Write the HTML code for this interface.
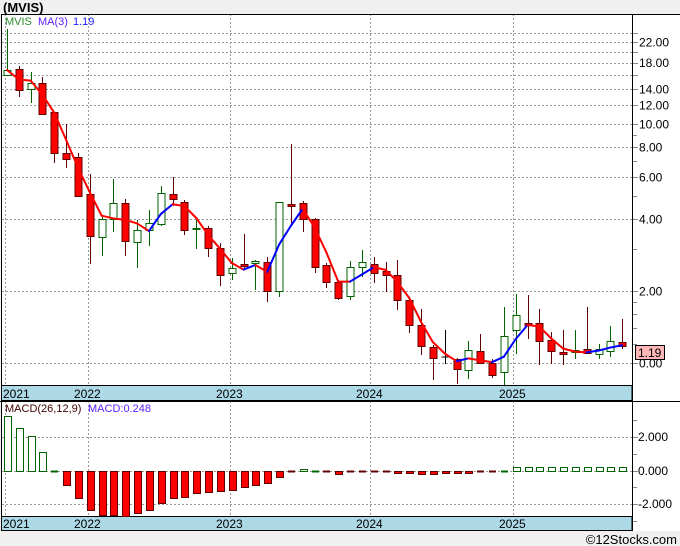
<!DOCTYPE html>
<html><head><meta charset="utf-8"><style>
html,body{margin:0;padding:0;background:#f0f0f0;width:680px;height:546px;overflow:hidden}
svg{display:block}
text{font-family:"Liberation Sans","DejaVu Sans",sans-serif}
</style></head><body>
<svg id="s" width="680" height="546" xmlns="http://www.w3.org/2000/svg">
<rect x="0" y="0" width="680" height="546" fill="#f0f0f0"/>
<text x="3" y="12" font-size="13" font-weight="bold" fill="#000">(MVIS)</text>
<rect x="1" y="14" width="679" height="517" fill="#fff"/>
<g id="g"></g>
</svg>
<script>
var g=document.getElementById('g'),h='';
function L(x1,y1,x2,y2,c,w,d){h+='<line x1="'+x1+'" y1="'+y1+'" x2="'+x2+'" y2="'+y2+'" stroke="'+c+'" stroke-width="'+(w||1)+'"'+(d?' stroke-dasharray="'+d+'"':'')+'/>';}
function R(x,y,w,hh,f,s){h+='<rect x="'+x+'" y="'+y+'" width="'+w+'" height="'+hh+'" fill="'+f+'" stroke="'+s+'" stroke-width="1"/>';}
function T(x,y,t,c,sz,a){h+='<text x="'+x+'" y="'+y+'" font-size="'+(sz||12)+'" fill="'+c+'"'+(a?' text-anchor="'+a+'"':'')+'>'+t+'</text>';}
function Y(p){return 363-239.2*Math.log10(p);}
[24,22,20,18,16,14,12,10,8,6,4,2,1].forEach(function(p){var y=Math.round(Y(p))+.5;L(2,y,632,y,'#999',1,'2,2');L(632,y,638,y,'#888');});
[9,7,5,3,1.8,1.6,1.4,1.2].forEach(function(p){var y=Math.round(Y(p))+.5;L(632,y,637,y,'#888');});
var yrs=[[88.5,'2022',74],[230.5,'2023',216],[370.5,'2024',356],[513.5,'2025',499]];
yrs.forEach(function(v){L(v[0],14,v[0],385,'#999',1,'2,2');L(v[0],401,v[0],516,'#999',1,'2,2');});
L(5.5,14,5.5,385,'#999',1,'2,2');L(5.5,401,5.5,516,'#999',1,'2,2');
[[22,'22.00'],[18,'18.00'],[14,'14.00'],[12,'12.00'],[10,'10.00'],[8,'8.00'],[6,'6.00'],[4,'4.00'],[2,'2.00'],[1,'0.00']].forEach(function(v){T(639,Y(v[0])+4.5,v[1],'#000',12);});
var C=[
['g',75,70,29,75],['r',69,90,66,97],['g',89,83,72,103],['r',83,114,77,115],['r',112,153,112,163],['r',153,159,124,168],['r',157,196,153,196],['r',194,236,174,264],['g',237,219,217,256],['g',219,203,179,232],
['r',203,241,199,256],['g',242,230,220,268],['g',230,223,210,246],['g',224,193,186,226],['r',194,199,177,206],['r',202,230,200,235],['g',229,228,220,249],['r',228,248,226,257],['r',248,275,243,286],['g',273,268,258,280],
['r',264,266,234,270],['g',263,261,260,290],['r',262,291,257,302],['g',291,202,202,297],['r',204,206,144,224],['r',203,219,201,232],['r',219,267,218,273],['r',265,282,263,288],['r',282,298,280,300],['g',296,267,261,300],
['g',267,262,250,277],['r',264,273,257,283],['r',271,275,262,292],['r',275,300,260,310],['r',300,325,298,333],['r',325,346,309,355],['r',347,358,345,380],['k',357,357,330,364],['r',359,369,358,384],['g',370,350,341,379],
['r',351,363,334,364],['r',363,375,359,378],['g',372,336,307,387],['g',330,315,294,354],['r',323,325,295,339],['r',323,341,309,365],['r',340,351,332,364],['r',352,354,330,365],['g',352,350,330,359],['r',349,353,307,354],
['g',354,349,344,359],['g',351,341,326,357],['r',342,346,319,349]];
function X(i){return 7+i*11.83;}
var closes=[];
C.forEach(function(c,i){var x=Math.round(X(i))+.5,t=Math.min(c[1],c[2]),b=Math.max(c[1],c[2]);
 var wc=c[0]=='r'?'#600000':(c[0]=='g'?'#006400':'#000');
 L(x,c[3],x,t,wc);L(x,b,x,c[4],wc);
 var bh=Math.max(b-t,1);
 if(c[0]=='r')R(x-3.5,t+.5,7,bh,'#ff0000','#600000');
 else if(c[0]=='g')R(x-3.5,t+.5,7,bh,'#fff','#006400');
 else L(x-4,t,x+4,t,'#000');
 closes.push(Math.pow(10,(363-c[2])/239.2));});
var ma=[];for(var i=2;i<closes.length;i++){ma.push([X(i),Y((closes[i]+closes[i-1]+closes[i-2])/3)]);}
ma.unshift([X(0),Y(closes[0])],[X(1),Y((closes[0]+closes[1])/2)]);
for(var i=1;i<ma.length;i++){var c=ma[i][1]<ma[i-1][1]?'#0000ff':'#ff0000';h+='<line x1="'+ma[i-1][0]+'" y1="'+ma[i-1][1]+'" x2="'+ma[i][0]+'" y2="'+ma[i][1]+'" stroke="'+c+'" stroke-width="2" stroke-linecap="round"/>';}
R(635.5,345.5,29,14,'#ffb6b6','#000');T(638,357,'1.19','#000',12);
T(5,25,'MVIS','#2e8b2e',11);T(38,25,'MA(3)','#6020ff',11);T(73,25,'1.19','#2020ff',11);
R(1.5,385.5,630.5,15,'#add8e6','#000');R(1.5,516.5,630.5,14,'#add8e6','#000');
T(3,398,'2021','#000',12);T(3,528,'2021','#000',12);
yrs.forEach(function(v){T(v[2],398,v[1],'#000',12);T(v[2],528,v[1],'#000',12);});
L(0,401.5,680,401.5,'#000');
[437,471,504].forEach(function(y){L(2,y+.5,632,y+.5,'#999',1,'2,2');L(632,y+.5,638,y+.5,'#888');});
[420,454,487,521].forEach(function(y){L(632,y+.5,637,y+.5,'#888');});
T(638,441,'2.000','#000',12);T(638,475,'0.000','#000',12);T(638,508,'-2.000','#000',12);
var M=[55,43,35,19,0,-14,-27,-39,-44,-44,-45,-42,-39,-32,-27,-26,-22,-21,-20,-19,-16,-14,-12,-6,-1,2,0,-1,-3,-1,-1,-1,-1,-2,-2,-3,-3,-2,-2,-2,-1,-1,1,4,4,4,4,4,4,4,4,4,4];
M.forEach(function(v,i){var x=Math.round(X(i))-3;
 if(v>=2)R(x+.5,471.5-v,7,v,'#fff','#006400');
 else if(v<=-2)R(x+.5,471.5,7,-v,'#ff0000','#600000');
 else L(x,471.5,x+7,471.5,v<0?'#600000':'#006400',2);});
T(5,412,'MACD(26,12,9)','#400000',11);T(88,412,'MACD:0.248','#6020ff',11);
L(1.5,14,1.5,531,'#000');L(1,14.5,680,14.5,'#000');L(632.5,14,632.5,531,'#000');
T(677,544,'©12Stocks.com','#000',13,'end');
g.innerHTML=h;
</script>
</body></html>
